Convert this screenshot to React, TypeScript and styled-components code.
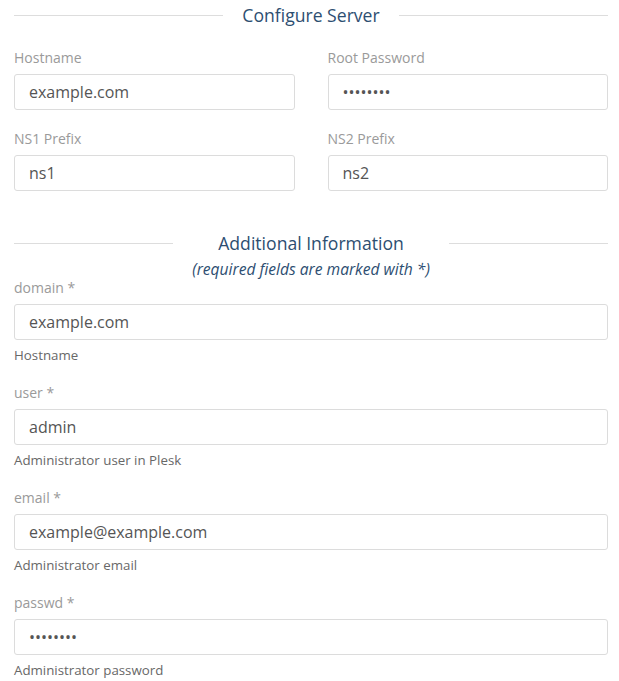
import { useEffect, useRef } from "react";
import styled, { createGlobalStyle } from "styled-components";

const GlobalStyle = createGlobalStyle`
  html, body {
    margin: 0;
    padding: 0;
    background: #ffffff;
    font-family: "Open Sans", "Noto Sans", sans-serif;
  }
`;

interface ISectionTitle {
  title: string;
  note?: string;
}

function SectionTitle({ title, note }: ISectionTitle) {
  return (
    <TitleRow>
      <Rule />
      <TitleBlock>
        <TitleText>{title}</TitleText>
        {note && <TitleNote>{note}</TitleNote>}
      </TitleBlock>
      <Rule />
    </TitleRow>
  );
}

interface IField {
  label: string;
  value: string;
  help?: string;
  type?: string;
  focused?: boolean;
}

function Field({ label, value, help, type = "text", focused }: IField) {
  const ref = useRef<HTMLInputElement>(null);
  useEffect(() => {
    if (focused && ref.current) {
      ref.current.focus();
      const end = ref.current.value.length;
      ref.current.setSelectionRange(end, end);
    }
  }, [focused]);
  return (
    <FieldGroup $hasHelp={!!help}>
      <Label>{label}</Label>
      <Input ref={ref} type={type} defaultValue={value} />
      {help && <Help>{help}</Help>}
    </FieldGroup>
  );
}

export default function App() {
  return (
    <>
      <GlobalStyle />
      <Page>
        <SectionTitle title="Configure Server" />
        <TwoColumns>
          <Field label="Hostname" value="example.com" />
          <Field label="Root Password" value="password" type="password" />
          <Field label="NS1 Prefix" value="ns1" />
          <Field label="NS2 Prefix" value="ns2" />
        </TwoColumns>
        <Spacer />
        <SectionTitle
          title="Additional Information"
          note="(required fields are marked with *)"
        />
        <Field label="domain *" value="example.com" help="Hostname" />
        <Field label="user *" value="admin" help="Administrator user in Plesk" />
        <Field
          label="email *"
          value="example@example.com"
          help="Administrator email"
        />
        <Field
          label="passwd *"
          value="password"
          type="password"
          help="Administrator password"
          focused
        />
      </Page>
    </>
  );
}

const Page = styled.main`
  padding: 3px 11px 0 14px;
`;

const TitleRow = styled.div`
  display: flex;
  align-items: flex-start;
`;

const Rule = styled.div`
  flex: 1;
  height: 1px;
  background: #dddddd;
  margin-top: 12px;
`;

const TitleBlock = styled.div`
  padding: 0 19px;
  text-align: center;
`;

const TitleText = styled.div`
  font-size: 17.6px;
  line-height: 24px;
  color: #2d4e71;
`;

const TitleNote = styled.div`
  font-size: 15.6px;
  line-height: 18px;
  font-style: italic;
  color: #2d4e71;
  margin-top: 5px;
  white-space: nowrap;
`;

const TwoColumns = styled.div`
  display: grid;
  grid-template-columns: 1fr 1fr;
  column-gap: 33px;
  margin-top: 21px;
`;

const Spacer = styled.div`
  height: 21px;
`;

const FieldGroup = styled.div<{ $hasHelp: boolean }>`
  display: flex;
  flex-direction: column;
  margin-bottom: 19px;
`;

const Label = styled.label`
  font-size: 14px;
  line-height: 20px;
  color: #9a9a9a;
  margin-bottom: 6px;
`;

const Input = styled.input`
  box-sizing: border-box;
  height: 36px;
  width: 100%;
  padding: 0 14px;
  border: 1px solid #dcdcdc;
  border-radius: 3px;
  font-family: "Open Sans", "Noto Sans", sans-serif;
  font-size: 16px;
  color: #555555;
  background: #ffffff;
  outline: none;
  caret-color: #333333;
`;

const Help = styled.div`
  font-size: 13.3px;
  line-height: 18px;
  color: #686868;
  margin-top: 6px;
`;
